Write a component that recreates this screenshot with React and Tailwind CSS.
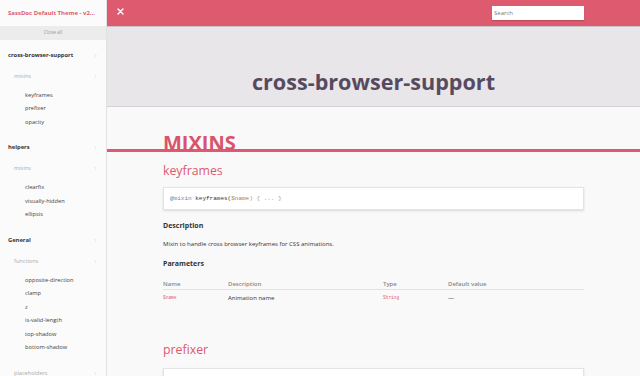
import { ChevronRight } from "lucide-react";

const groups = [
  {
    name: "cross-browser-support",
    sub: [{ name: "mixins", items: ["keyframes", "prefixer", "opacity"] }],
  },
  {
    name: "helpers",
    sub: [{ name: "mixins", items: ["clearfix", "visually-hidden", "ellipsis"] }],
  },
  {
    name: "General",
    sub: [
      {
        name: "functions",
        items: ["opposite-direction", "clamp", "z", "is-valid-length", "top-shadow", "bottom-shadow"],
      },
      { name: "placeholders", items: [] },
    ],
  },
];

function Chevron() {
  return <ChevronRight size={5} strokeWidth={2} className="text-[#c8c8c8]" />;
}

function Sidebar() {
  return (
    <aside className="w-[107px] shrink-0 h-full border-r border-[#e2e2e2] bg-[#fbfbfb] overflow-hidden">
      {/* titre */}
      <div className="h-[26px] flex items-center px-[8px]">
        <p className="whitespace-nowrap text-[6px] font-bold text-[#dd5a6e]">SassDoc Default Theme - v2...</p>
      </div>
      <div className="h-[14px] flex items-center justify-center bg-[#ececec] text-[4.8px] text-[#999] whitespace-pre">
        Close all
      </div>

      <ul className="pt-[4.5px]">
        {groups.map((g) => (
          <li key={g.name}>
            <div className="h-[21px] flex items-center justify-between pl-[8px] pr-[8px]">
              <span className="text-[5.8px] font-bold text-[#333]">{g.name}</span>
              <Chevron />
            </div>
            {g.sub.map((s) => (
              <div key={s.name}>
                <div className="h-[21px] flex items-center justify-between pl-[14px] pr-[8px]">
                  <span className="text-[5.6px] text-[#aaa]">{s.name}</span>
                  <Chevron />
                </div>
                {s.items.length > 0 && (
                  <ul className="pt-[2px] pb-[8px]">
                    {s.items.map((it) => (
                      <li key={it} className="h-[13.5px] flex items-center pl-[25px] text-[5.7px] text-[#444]">
                        {it}
                      </li>
                    ))}
                  </ul>
                )}
              </div>
            ))}
          </li>
        ))}
      </ul>
    </aside>
  );
}

function CodeBox({ children }) {
  return (
    <div className="h-[23px] flex items-center pl-[6px] bg-white border border-[#e4e4e4] shadow-[0_1px_2px_rgba(0,0,0,0.12)] font-['Liberation_Mono',monospace] text-[6px] whitespace-nowrap overflow-hidden">
      {children}
    </div>
  );
}

export default function App() {
  return (
    <div className="w-[640px] h-[376px] overflow-hidden flex bg-[#f9f9f9] font-['Open_Sans',sans-serif]">
      <Sidebar />

      <main className="flex-1 min-w-0 flex flex-col">
        {/* barre du haut */}
        <header className="h-[27px] shrink-0 flex items-center justify-between pl-[10px] pr-[56px] bg-[#dd5a6f] border-b border-[#c9c4c9]">
          <svg width="7" height="7" viewBox="0 0 7 7" className="mb-[3px]">
            <path d="M1 1 L6 6 M6 1 L1 6" stroke="white" strokeWidth="1.4" strokeLinecap="round" />
          </svg>
          <input
            type="text"
            placeholder="Search"
            className="w-[92px] h-[14px] mb-[1px] px-[2px] bg-white text-[6px] text-[#333] placeholder:text-[#777] outline-none shadow-[0_1px_1px_rgba(0,0,0,0.15)]"
          />
        </header>

        {/* bandeau */}
        <div className="h-[80px] shrink-0 bg-[#e8e6e9] border-b border-[#d6d4d7] pt-[44px]">
          <h1 className="text-center text-[21.6px] leading-none font-bold text-[#574a60]">cross-browser-support</h1>
        </div>

        <div className="pt-[26px]">
          <div className="px-[56px]">
            <h2 className="text-[20px] leading-none font-bold text-[#d9546b]">MIXINS</h2>
          </div>
          <div className="h-[3px] -mt-[4px] bg-[#dd5a6f]" />

          <div className="px-[56px]">
            <h3 className="mt-[13px] text-[12.3px] leading-none text-[#dd5a6e]">keyframes</h3>

            <div className="mt-[10px]">
              <CodeBox>
                <span className="text-[#4c8dc4]">@mixin</span>
                <span className="text-[#333]">&nbsp;keyframes(</span>
                <span className="text-[#b07d3c]">$name</span>
                <span className="text-[#999]">) {"{"} ... {"}"}</span>
              </CodeBox>
            </div>

            <p className="mt-[12px] text-[7px] leading-none font-bold text-[#333]">Description</p>
            <p className="mt-[12px] text-[6px] leading-none text-[#333]">
              Mixin to handle cross browser keyframes for CSS animations.
            </p>

            <p className="mt-[13px] text-[7px] leading-none font-bold text-[#333]">Parameters</p>

            <div className="mt-[14px] w-[421px]">
              <div className="grid grid-cols-[65px_155px_65px_1fr] h-[9px] items-start border-b border-[#e2e2e2] text-[6px] leading-none font-semibold text-[#888]">
                <span>Name</span>
                <span>Description</span>
                <span>Type</span>
                <span>Default value</span>
              </div>
              <div className="grid grid-cols-[65px_155px_65px_1fr] h-[16px] items-center text-[6px] font-normal text-[#333]">
                <span className="font-['Liberation_Mono',monospace] text-[4.5px] text-[#dd5a6e]">$name</span>
                <span>Animation name</span>
                <span className="font-['Liberation_Mono',monospace] text-[4.5px] text-[#dd5a6e]">String</span>
                <span>—</span>
              </div>
            </div>

            <h3 className="mt-[38px] text-[12.3px] leading-none text-[#dd5a6e]">prefixer</h3>

            <div className="mt-[11px]">
              <CodeBox>
                <span className="text-[#4c8dc4]">@mixin</span>
                <span className="text-[#333]">&nbsp;prefixer(</span>
                <span className="text-[#b07d3c]">$property, $value, $prefixes: ()</span>
                <span className="text-[#999]">) {"{"} ... {"}"}</span>
              </CodeBox>
            </div>
          </div>
        </div>
      </main>
    </div>
  );
}
